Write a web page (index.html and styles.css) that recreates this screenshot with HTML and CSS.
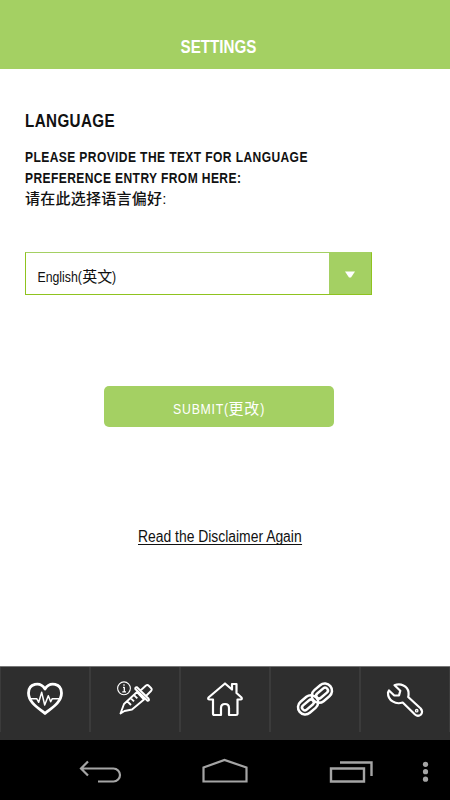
FILE: index.html
```
<!DOCTYPE html>
<html lang="en">
<head>
  <meta charset="utf-8">
  <title>Settings</title>
  <link rel="stylesheet" href="styles.css">
</head>
<body>
  <div class="screen">
    <header class="header">
      <h1 class="title">SETTINGS</h1>
    </header>

    <main class="content">
      <h2 class="heading">LANGUAGE</h2>
      <p class="prompt">PLEASE PROVIDE THE TEXT FOR LANGUAGE<br>PREFERENCE ENTRY FROM HERE:</p>
      <p class="prompt-zh">请在此选择语言偏好:</p>
      <div class="select">
        <div class="select-value">English(<span class="zh">英文</span>)</div>
        <div class="select-arrow">
          <svg width="10" height="7" viewBox="0 0 10 7"><path d="M0 .5h10L6 6.500H4z" fill="#fff"/></svg>
        </div>
      </div>
      <button class="submit"><span class="submit-label">SUBMIT(<span class="zh">更改</span>)</span></button>
      <a class="disclaimer" href="#">Read the Disclaimer Again</a>
    </main>

    <nav class="tabs">
      <a class="tab" href="#">
        <svg width="90" height="66" viewBox="0 0 90 66">
          <path d="M45 46.500C40 42 28.500 36 28.500 26c0-9.500 11.500-12 16.500-4 5-8 16.500-5.500 16.500 4 0 10-11.500 16-16.500 20.500z" stroke-width="2.800"/>
          <path d="M30 31.700h6.700l2 3.600 3-10 3 12.700 3.600-9.300 2.400 6 1.600-3H60" stroke-width="1.500"/>
        </svg>
      </a>
      <a class="tab" href="#">
        <svg width="90" height="66" viewBox="0 0 90 66">
          <circle cx="34" cy="21.300" r="6.400" stroke-width="1.100"/>
          <path d="M33 20.300h1.300v4.500M32.300 24.800h3.700M34 17.300v1.400" stroke-width="1.300"/>
          <path d="M30.500 46.500l3.500-9.500 13-12 7 7.500-12 10-7.500 1.500zM57.500 33.800L45.300 22q-.5-2 1.700-1.700l11.700 11.500q1 2-1.200 2zM50.500 23.500l5.500-5q1.500-1 3 .5l2 2q1.500 1.500 0 3l-5 5M37.500 34.500l3.500 3.500M41 31.300l3 3M44.300 28.300l3 3" stroke-width="1.900"/>
        </svg>
      </a>
      <a class="tab" href="#">
        <svg width="90" height="66" viewBox="0 0 90 66">
          <path d="M28.500 30.500L45 16.500l7 6v-5.500h4.500v9l5 4.500q1 2-1 2h-3v14.500q0 1-1.500 1H49v-7q0-4-4-4t-4 4v7h-6.500q-1.500 0-1.500-1.500V32.500h-3.500q-2 0-1-2z" stroke-width="2.200"/>
        </svg>
      </a>
      <a class="tab" href="#">
        <svg width="90" height="66" viewBox="0 0 90 66">
          <g transform="rotate(-40 45 32)" stroke-width="2.500">
            <rect x="25" y="24.800" width="22" height="14.400" rx="7.200"/>
            <rect x="29" y="29.200" width="13.500" height="5.600" rx="2.800"/>
            <rect x="43" y="24.800" width="22" height="14.400" rx="7.200"/>
            <rect x="47.500" y="29.200" width="13.500" height="5.600" rx="2.800"/>
          </g>
        </svg>
      </a>
      <a class="tab" href="#">
        <svg width="90" height="66" viewBox="0 0 90 66">
          <path d="M34.500 18.300c6-2.500 13 .7 14 6.700q.3 3-.3 5l12.500 11.500q2.500 3 .3 6-3 2.500-6 0L42.700 35.500c-7 2.500-15-2-14.700-10l1-2 5 4.800 5 .2 1.300-4.800z" stroke-width="2.200"/>
          <circle cx="56.700" cy="43.700" r="1.200" stroke-width="1.300"/>
        </svg>
      </a>
    </nav>

    <footer class="system-bar">
      <svg width="450" height="60" viewBox="0 0 450 60">
        <path d="M81 28.500h32.500a6.500 6.500 0 0 1 0 13H98M88 21.500l-7 7 7 7" stroke-width="2.200"/>
        <path d="M203.500 41.500V27.500l21-7.500 22 7.500v14z" stroke-width="2.200"/>
        <path d="M331 28.500h33v13h-33zM340 22.500h31.500V36" stroke-width="2.400"/>
        <g class="dots"><circle cx="425.500" cy="24.300" r="2.600"/><circle cx="425.500" cy="31.700" r="2.600"/><circle cx="425.500" cy="39.200" r="2.600"/></g>
      </svg>
    </footer>
  </div>
</body>
</html>
```

FILE: styles.css
```
body {
  margin: 0;
  background: #FFFFFF;
  color: #111111;
  font-family: "Liberation Sans", "Noto Sans CJK SC", sans-serif;
}

.screen {
  display: flex;
  flex-direction: column;
  width: 450px;
  height: 800px;
  overflow: hidden;
}

.header {
  height: 69px;
  background: #A4D063;
  text-align: center;
}

/* condensed lettering */
.title,
.heading,
.prompt,
.select-value,
.submit-label,
.disclaimer {
  transform: scaleX(0.82);
  transform-origin: left;
}

/* keeps the Chinese characters at full width inside condensed text */
.zh {
  display: inline-block;
  margin: 0 3.3px;
  transform: scaleX(1.22);
}

.title {
  margin: 0;
  padding-right: 13px;
  padding-top: 36px;
  color: #FFFFFF;
  font-size: 18.5px;
  line-height: 22px;
  transform-origin: 218.5px 0;
}

.content {
  display: flex;
  flex: 1;
  flex-direction: column;
  padding-left: 25px;
}

.heading {
  margin: 41px 0 0;
  font-size: 18.5px;
  line-height: 22px;
  letter-spacing: 0.5px;
}

.prompt {
  margin: 14px 0 0;
  font-size: 15px;
  font-weight: bold;
  line-height: 21px;
  letter-spacing: 0.5px;
  transform: scaleX(0.803);
}

.prompt-zh {
  margin: 0;
  font-size: 15px;
  font-weight: 500;
  line-height: 21px;
  letter-spacing: 0.25px;
}

.select {
  display: flex;
  box-sizing: border-box;
  width: 347px;
  height: 43px;
  margin-top: 43px;
  border: 1px solid #8FC31F;
  border-top-color: #A4D063;
}

.select-value {
  flex: 1;
  padding: 3px 0 0 14px;
  font-size: 15px;
  line-height: 41px;
}

.select-arrow {
  display: flex;
  align-items: center;
  justify-content: center;
  width: 42px;
  padding-top: 2px;
  box-sizing: border-box;
  background: #A4D063;
}

.submit {
  width: 230px;
  height: 41px;
  margin: 91px 0 0 79px;
  padding: 2px 0 0;
  border: 0;
  border-radius: 5px;
  background: #A4D063;
  color: #FFFFFF;
  font-family: inherit;
  font-size: 15px;
  letter-spacing: 0.9px;
}

.submit-label {
  display: inline-block;
  transform-origin: center;
}

.disclaimer {
  align-self: flex-start;
  margin: 102px 0 0 113px;
  border-bottom: 1px solid #111111;
  color: #111111;
  font-size: 16px;
  line-height: 15px;
  text-decoration: none;
  transform: scaleX(0.868);
}

.tabs {
  display: flex;
  height: 73px;
  border-top: 1px solid #777777;
  background: #2E2E2E;
}

.tab {
  box-sizing: border-box;
  flex: none;
  width: 90px;
  height: 65px;
  border-right: 1px solid #3B3B3B;
  border-left: 1px solid #3B3B3B;
}

.tab svg {
  display: block;
  margin-left: -1px;
}

.tab svg,
.system-bar svg {
  fill: none;
  stroke: #FFFFFF;
  stroke-linejoin: round;
}

.system-bar {
  height: 60px;
  background: #000000;
}

.system-bar svg {
  display: block;
  stroke: #A5A5A5;
  stroke-linejoin: miter;
}

.system-bar .dots {
  fill: #A5A5A5;
  stroke: none;
}
```
